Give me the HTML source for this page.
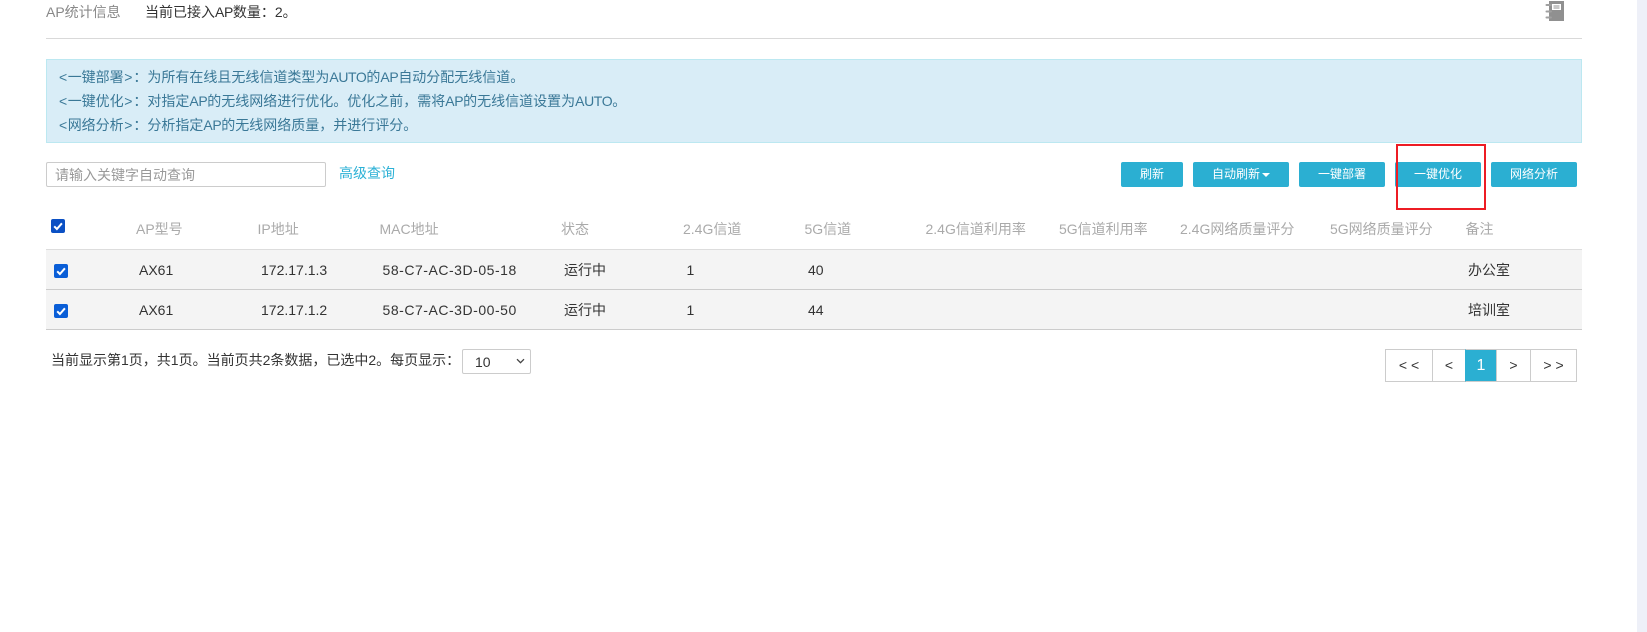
<!DOCTYPE html>
<html lang="zh">
<head>
<meta charset="utf-8">
<title>AP</title>
<style>
*{box-sizing:border-box}
html,body{margin:0;padding:0;background:#fff}
body{position:relative;width:1647px;height:632px;overflow:hidden;font-family:"Liberation Sans","Noto Sans CJK SC",sans-serif;font-size:14px;color:#333}
.a{position:absolute;white-space:nowrap;line-height:20px}
.h{color:#aaa;top:219px}
.r1{top:260px;color:#333}
.r2{top:300px;color:#333}
.btn{position:absolute;top:162px;height:25px;background:#2bafd2;color:#fff;font-size:12px;line-height:25px;text-align:center;border-radius:2px}
.line{position:absolute;left:46px;width:1536px;height:1px;background:#ccc}
.cb{position:absolute;width:14px;height:14px;border-radius:2px;background:#0a5ed7}
.cb svg{display:block;width:14px;height:14px}
.pg{position:absolute;top:349px;height:33px;border:1px solid #ccc;text-align:center;line-height:31px;font-size:14px;background:#fff;color:#333;letter-spacing:0}
.al{color:#3a7897;font-size:14px;left:59px}
.l{letter-spacing:-.4px}
.gt{margin-left:.5px;margin-right:1px}
.lt{margin-right:.5px}
.m{letter-spacing:.53px}
</style>
</head>
<body>
<div class="a" style="left:46px;top:2px;color:#888;font-size:14px">AP统计信息</div>
<div class="a" style="left:145px;top:2px;color:#333;font-size:14px">当前已接入<span class="l">AP</span>数量：2。</div>

<svg style="position:absolute;left:1545px;top:1px" width="19" height="20" viewBox="0 0 19 20">
<rect x="4" y="0" width="15" height="20" fill="#909090"/>
<rect x="7" y="3" width="9" height="6" fill="#fff"/>
<rect x="8.500" y="4.500" width="6" height="1" fill="#909090"/>
<rect x="8.500" y="6.500" width="6" height="1" fill="#909090"/>
<path d="M1.500 4H6M1.500 10.500H6M1.500 16.500H6" stroke="#a0a0a0" stroke-width="2" stroke-linecap="round" fill="none"/>
</svg>

<div style="position:absolute;left:46px;top:38px;width:1536px;height:1px;background:#d9d9d9"></div>

<div style="position:absolute;left:46px;top:59px;width:1536px;height:84px;background:#d9edf7;border:1px solid #bce8f1"></div>
<div class="a al" style="top:67px"><span class="lt">&lt;</span>一键部署<span class="gt">&gt;</span>：为所有在线且无线信道类型为<span class="l">AUTO</span>的<span class="l">AP</span>自动分配无线信道。</div>
<div class="a al" style="top:91px"><span class="lt">&lt;</span>一键优化<span class="gt">&gt;</span>：对指定<span class="l">AP</span>的无线网络进行优化。优化之前，需将<span class="l">AP</span>的无线信道设置为<span class="l">AUTO</span>。</div>
<div class="a al" style="top:115px"><span class="lt">&lt;</span>网络分析<span class="gt">&gt;</span>：分析指定<span class="l">AP</span>的无线网络质量，并进行评分。</div>

<div style="position:absolute;left:46px;top:162px;width:280px;height:25px;border:1px solid #ccc;border-radius:2px;background:#fff"></div>
<div class="a" style="left:55px;top:165px;color:#999">请输入关键字自动查询</div>
<div class="a" style="left:339px;top:163px;color:#2cb1d6">高级查询</div>

<div class="btn" style="left:1121px;width:62px">刷新</div>
<div class="btn" style="left:1193px;width:96px">自动刷新<span style="display:inline-block;width:0;height:0;border-left:4px solid transparent;border-right:4px solid transparent;border-top:4px solid #fff;margin-left:2px;vertical-align:middle"></span></div>
<div class="btn" style="left:1299px;width:86px">一键部署</div>
<div class="btn" style="left:1395px;width:86px">一键优化</div>
<div class="btn" style="left:1491px;width:86px">网络分析</div>

<div style="position:absolute;left:1396px;top:144px;width:90px;height:66px;border:2px solid #ed1c24"></div>

<div class="cb" style="left:51px;top:219px;background:#0b50c4"><svg viewBox="0 0 14 14"><path d="M3.200 7.300L5.900 10L10.900 4.300" fill="none" stroke="#fff" stroke-width="2"/></svg></div>
<div class="a h" style="left:136px">AP型号</div>
<div class="a h" style="left:257.500px">IP地址</div>
<div class="a h" style="left:379.500px">MAC地址</div>
<div class="a h" style="left:561px">状态</div>
<div class="a h" style="left:683px">2.4G信道</div>
<div class="a h" style="left:804.500px">5G信道</div>
<div class="a h" style="left:925.500px">2.4G信道利用率</div>
<div class="a h" style="left:1059px">5G信道利用率</div>
<div class="a h" style="left:1180px">2.4G网络质量评分</div>
<div class="a h" style="left:1330px">5G网络质量评分</div>
<div class="a h" style="left:1465.500px">备注</div>

<div style="position:absolute;left:46px;top:249px;width:1536px;height:80px;background:#f4f4f4"></div>
<div class="line" style="top:249px;background:#ddd"></div>
<div class="line" style="top:289px"></div>
<div class="line" style="top:329px"></div>

<div class="cb" style="left:54px;top:264px"><svg viewBox="0 0 14 14"><path d="M3.200 7.300L5.900 10L10.900 4.300" fill="none" stroke="#fff" stroke-width="2"/></svg></div>
<div class="a r1" style="left:139px">AX61</div>
<div class="a r1" style="left:261px">172.17.1.3</div>
<div class="a r1" style="left:382.500px"><span class="m">58-C7-AC-3D-05-18</span></div>
<div class="a r1" style="left:564px">运行中</div>
<div class="a r1" style="left:686.500px">1</div>
<div class="a r1" style="left:808px">40</div>
<div class="a r1" style="left:1468px">办公室</div>

<div class="cb" style="left:54px;top:304px"><svg viewBox="0 0 14 14"><path d="M3.200 7.300L5.900 10L10.900 4.300" fill="none" stroke="#fff" stroke-width="2"/></svg></div>
<div class="a r2" style="left:139px">AX61</div>
<div class="a r2" style="left:261px">172.17.1.2</div>
<div class="a r2" style="left:382.500px"><span class="m">58-C7-AC-3D-00-50</span></div>
<div class="a r2" style="left:564px">运行中</div>
<div class="a r2" style="left:686.500px">1</div>
<div class="a r2" style="left:808px">44</div>
<div class="a r2" style="left:1468px">培训室</div>

<div class="a" style="left:51px;top:350px;color:#333">当前显示第1页，共1页。当前页共2条数据，已选中2。每页显示：</div>
<div style="position:absolute;left:462px;top:349px;width:69px;height:25px;border:1px solid #ccc;border-radius:2px;background:#fff"></div>
<div class="a" style="left:475px;top:352px;color:#333">10</div>
<svg style="position:absolute;left:516px;top:358px" width="9" height="6" viewBox="0 0 9 6"><path d="M1 1.200L4.500 4.700L8 1.200" fill="none" stroke="#444" stroke-width="1.300"/></svg>

<div class="pg" style="left:1385px;width:48px">&lt; &lt;</div>
<div class="pg" style="left:1432px;width:34px">&lt;</div>
<div class="pg" style="left:1465px;width:32px;background:#2bafd2;border-color:#2bafd2;color:#fff;border-top-color:#ccc;border-bottom-color:#ccc;font-size:16px">1</div>
<div class="pg" style="left:1496px;width:35px">&gt;</div>
<div class="pg" style="left:1530px;width:47px">&gt; &gt;</div>

<div style="position:absolute;left:1637px;top:0;width:10px;height:632px;background:#eef0f8"></div>
</body>
</html>
